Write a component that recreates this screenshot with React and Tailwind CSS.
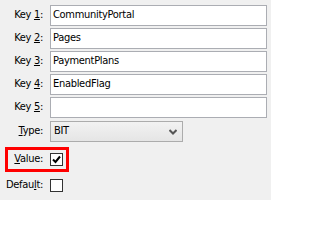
import React from 'react';

const Label = ({ pre, u, post }) => (
    <span className="w-[44px] shrink-0 text-right pr-[1px]">
        {pre}<span className="underline underline-offset-[1px]">{u}</span>{post}
    </span>
);

const TextRow = ({ n, value, className }) => (
    <div className={`flex items-center h-[21px] ${className || ''}`}>
        <Label pre="Key " u={n} post=":" />
        <div className="ml-[6px] w-[217px] h-full bg-white border border-[#abadb3] flex items-center px-[2px]">
            {value}
        </div>
    </div>
);

const Check = ({ checked }) => (
    <div className="w-[13px] h-[13px] ml-[6px] border border-[#333333] bg-white flex items-center justify-center">
        {checked && (
            <svg width="9" height="9" viewBox="0 0 9 9">
                <path d="M1 4.5 L3.5 7 L8 1.5" fill="none" stroke="#000" strokeWidth="2" />
            </svg>
        )}
    </div>
);

export default function App() {
    return (
        <div className="w-[271px] h-[200px] bg-[#f0f0f0] text-black text-[11px] tracking-[-0.3px] pt-[5px] overflow-hidden" style={{ fontFamily: '"DejaVu Sans Condensed", "DejaVu Sans", sans-serif' }}>
            <TextRow n="1" value="CommunityPortal" />
            <TextRow n="2" value="Pages" className="mt-[2px]" />
            <TextRow n="3" value="PaymentPlans" className="mt-[2px]" />
            <TextRow n="4" value="EnabledFlag" className="mt-[2px]" />
            <TextRow n="5" value="" className="mt-[2px]" />

            <div className="flex items-center h-[21px] mt-[3px]">
                <Label pre="" u="T" post="ype:" />
                <div className="ml-[6px] w-[133px] h-full border border-[#acacac] bg-gradient-to-b from-[#f2f2f2] to-[#e5e5e5] flex items-center justify-between pl-[3px] pr-[5px]">
                    <span>BIT</span>
                    <svg width="8" height="6" viewBox="0 0 8 6">
                        <path d="M0.5 1 L4 4.5 L7.5 1" fill="none" stroke="#555" strokeWidth="2" />
                    </svg>
                </div>
            </div>

            <div className="relative flex items-center h-[25px] mt-[5px]">
                <Label pre="" u="V" post="alue:" />
                <Check checked />
                <div className="absolute left-[5px] top-0 w-[64px] h-[25px] border-[3px] border-[#ff0000]" />
            </div>

            <div className="flex items-center h-[13px] mt-[7px]">
                <Label pre="Defau" u="l" post="t:" />
                <Check />
            </div>
        </div>
    );
}
